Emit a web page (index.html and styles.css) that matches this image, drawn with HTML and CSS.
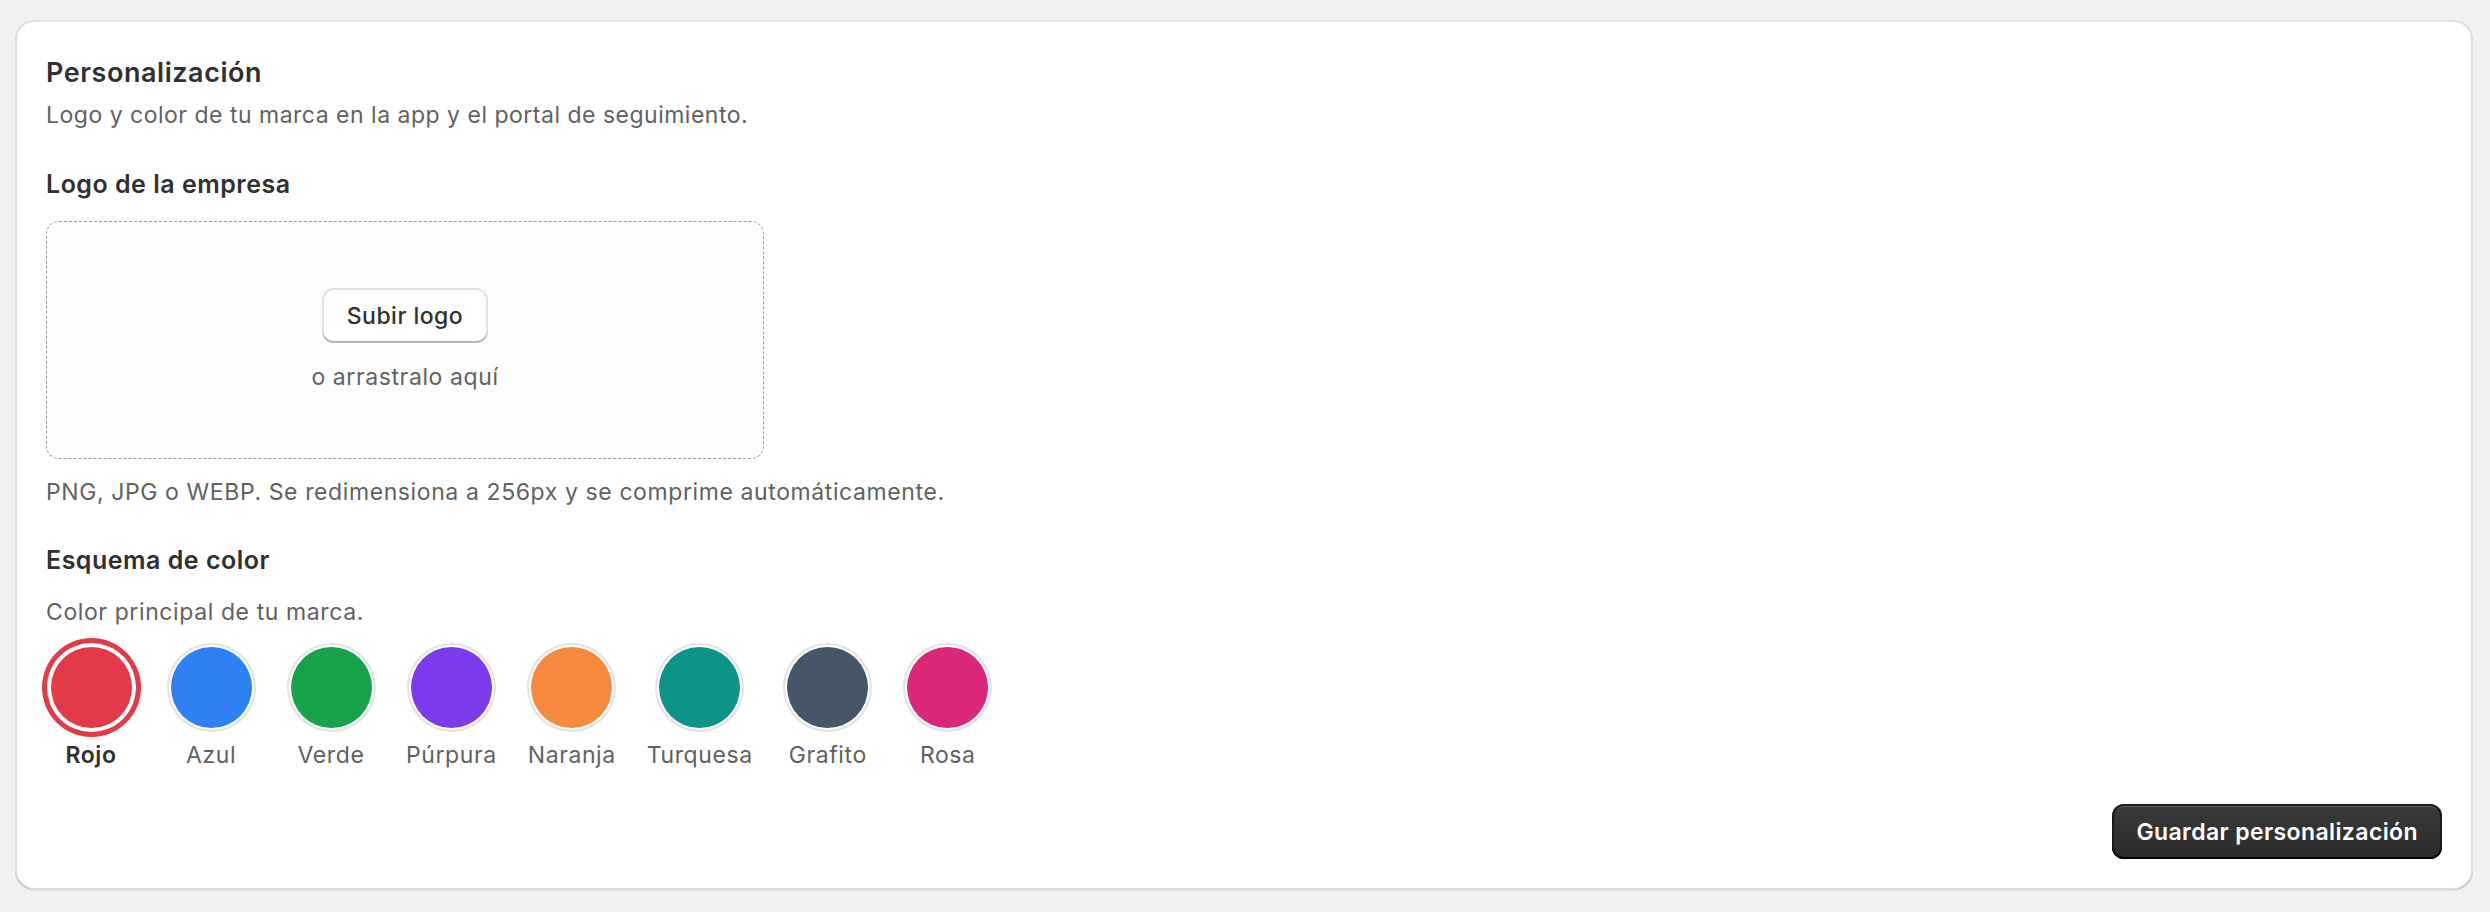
FILE: index.html
```html
<!DOCTYPE html>
<html lang="es">

<head>
    <meta charset="UTF-8">
    <meta name="viewport" content="width=device-width, initial-scale=1.0">
    <title>Personalización</title>
    <link rel="stylesheet" href="styles.css">
</head>

<body>
    <div class="card">
        <h2 class="card-title">Personalización</h2>
        <p class="card-subtitle">Logo y color de tu marca en la app y el portal de seguimiento.</p>

        <h3 class="section-title">Logo de la empresa</h3>
        <div class="dropzone">
            <button type="button" class="btn-secondary">Subir logo</button>
            <span class="dropzone-hint">o arrastralo aquí</span>
        </div>
        <p class="help-text">PNG, JPG o WEBP. Se redimensiona a 256px y se comprime automáticamente.</p>

        <h3 class="section-title section-title-color">Esquema de color</h3>
        <p class="color-hint">Color principal de tu marca.</p>

        <div class="swatches">
            <button type="button" class="swatch-item selected">
                <span class="swatch" style="background:#e23a48"></span>
                <span class="swatch-label">Rojo</span>
            </button>
            <button type="button" class="swatch-item">
                <span class="swatch" style="background:#3080f5"></span>
                <span class="swatch-label">Azul</span>
            </button>
            <button type="button" class="swatch-item">
                <span class="swatch" style="background:#18a34a"></span>
                <span class="swatch-label">Verde</span>
            </button>
            <button type="button" class="swatch-item">
                <span class="swatch" style="background:#7c3aed"></span>
                <span class="swatch-label">Púrpura</span>
            </button>
            <button type="button" class="swatch-item">
                <span class="swatch" style="background:#f58a3e"></span>
                <span class="swatch-label">Naranja</span>
            </button>
            <button type="button" class="swatch-item">
                <span class="swatch" style="background:#0d9488"></span>
                <span class="swatch-label">Turquesa</span>
            </button>
            <button type="button" class="swatch-item">
                <span class="swatch" style="background:#475569"></span>
                <span class="swatch-label">Grafito</span>
            </button>
            <button type="button" class="swatch-item">
                <span class="swatch" style="background:#db2777"></span>
                <span class="swatch-label">Rosa</span>
            </button>
        </div>

        <div class="card-footer">
            <button type="button" class="btn-primary">Guardar personalización</button>
        </div>
    </div>
</body>

</html>
```

FILE: styles.css
```css
body {
    font-family: Inter, "Noto Sans", sans-serif;
    margin: 0;
    padding: 20px 17px 21px 15px;
    background-color: #f1f1f1;
    color: #303030;
}

.card {
    background-color: #fff;
    border-radius: 20px;
    padding: 37px 31px 31px;
    box-shadow: 0 1px 0 0 rgba(26, 26, 26, 0.07),
        inset 0 2px 0 0 rgba(204, 204, 204, 0.5),
        inset 0 -2px 0 0 rgba(0, 0, 0, 0.15),
        inset -2px 0 0 0 rgba(0, 0, 0, 0.12),
        inset 2px 0 0 0 rgba(0, 0, 0, 0.12);
}

.card-title {
    font-size: 27px;
    line-height: 32px;
    font-weight: 600;
    letter-spacing: 0.55px;
    margin: 0;
}

.section-title {
    font-size: 25px;
    line-height: 32px;
    font-weight: 600;
    letter-spacing: 0.5px;
    margin: 38px 0 0;
}

.card-subtitle,
.help-text,
.color-hint {
    font-size: 23px;
    line-height: 30px;
    letter-spacing: 0.6px;
    color: #616161;
    margin: 0;
}

.card-subtitle {
    margin-top: 11px;
    letter-spacing: 0.5px;
}

.dropzone {
    margin-top: 21px;
    width: 718px;
    height: 238px;
    box-sizing: border-box;
    border: 1.5px dashed #9a9a9a;
    border-radius: 13px;
    background-color: #fdfdfd;
    display: flex;
    flex-direction: column;
    align-items: center;
    justify-content: center;
    gap: 19px;
}

.btn-secondary {
    font-family: inherit;
    font-size: 23px;
    font-weight: 550;
    letter-spacing: 0.5px;
    color: #303030;
    background-color: #fff;
    border: none;
    border-radius: 12px;
    height: 55px;
    padding: 0 25px;
    box-shadow: inset 0 -2px 0 0 #b5b5b5,
        inset 0 0 0 2px #e3e3e3,
        inset 0 2px 0 0 #fff;
    cursor: pointer;
}

.dropzone-hint {
    font-size: 23px;
    line-height: 30px;
    letter-spacing: 0.6px;
    color: #616161;
}

.help-text {
    margin-top: 18px;
}

.section-title-color {
    margin-top: 37px;
}

.color-hint {
    margin-top: 21px;
}

.swatches {
    display: flex;
    gap: 30px;
    margin-top: 20px;
}

.swatch-item {
    font-family: inherit;
    background: none;
    border: none;
    padding: 0;
    min-width: 90px;
    display: flex;
    flex-direction: column;
    align-items: center;
    gap: 12px;
    cursor: pointer;
}

.swatch {
    display: block;
    width: 81px;
    height: 81px;
    border-radius: 50%;
    box-shadow: 0 0 0 2px #fff, 0 0 0 4px #e3e3e3;
}

.swatch-item.selected .swatch {
    box-shadow: 0 0 0 4px #fff, 0 0 0 9px #e23a48;
}

.swatch-label {
    font-size: 23px;
    line-height: 30px;
    letter-spacing: 0.6px;
    color: #616161;
}

.swatch-item.selected .swatch-label {
    font-weight: 600;
    color: #303030;
}

.card-footer {
    display: flex;
    justify-content: flex-end;
    margin-top: 34px;
}

.btn-primary {
    font-family: inherit;
    font-size: 23px;
    font-weight: 600;
    letter-spacing: 0.4px;
    color: #fff;
    height: 55px;
    padding: 0 24px;
    border: none;
    border-radius: 12px;
    background: linear-gradient(#3a3a3a, #2b2b2b);
    box-shadow: inset 0 -2px 0 0 #000,
        inset 0 0 0 2px #1a1a1a,
        inset 0 3px 0 0 rgba(255, 255, 255, 0.2);
    cursor: pointer;
}
```
